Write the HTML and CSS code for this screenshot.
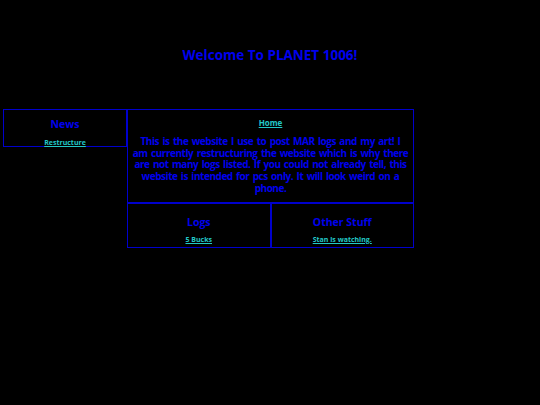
FILE: index.html
```html
<!DOCTYPE html>
<html>
<head>
<meta charset="utf-8">
<link rel="stylesheet" href="styles.css">
</head>
<body>
<h1 class="title">Welcome To PLANET 1006!</h1>
<div class="layout">
  <div class="box news">
    <h2 class="box-head">News</h2>
    <a class="link" href="#">Restructure</a>
  </div>
  <div class="right">
    <div class="box main">
      <a class="link home" href="#">Home</a>
      <p class="intro">This is the website I use to post MAR logs and my art! I<br>am currently restructuring the website which is why there<br>are not many logs listed. If you could not already tell, this<br>website is intended for pcs only. It will look weird on a<br>phone.</p>
    </div>
    <div class="row">
      <div class="box cell">
        <h2 class="box-head">Logs</h2>
        <a class="link" href="#">5 Bucks</a>
      </div>
      <div class="box cell">
        <h2 class="box-head">Other Stuff</h2>
        <a class="link" href="#">Stan is watching.</a>
      </div>
    </div>
  </div>
</div>
</body>
</html>
```

FILE: styles.css
```css
html, body {
  margin: 0;
  padding: 0;
  background: #000;
}
body {
  font-family: "Open Sans", "Liberation Sans", sans-serif;
  font-weight: 700;
  color: #0000ee;
  width: 540px;
  height: 405px;
}
.title {
  margin: 0;
  padding-top: 46px;
  height: 109px;
  box-sizing: border-box;
  text-align: center;
  font-size: 13.5px;
  line-height: 18px;
  font-weight: 700;
}
.layout {
  display: flex;
  align-items: flex-start;
  padding-left: 3px;
}
.box {
  border: 1px solid #0000cc;
  box-sizing: border-box;
  text-align: center;
}
.news {
  width: 124px;
  height: 38px;
}
.right {
  width: 287px;
  display: flex;
  flex-direction: column;
}
.main {
  height: 94px;
  padding: 6px 1px 0;
}
.row {
  display: flex;
}
.cell {
  flex: 1;
  height: 45px;
}
.box-head {
  margin: 0;
  padding-top: 7px;
  font-size: 10.5px;
  line-height: 14px;
  font-weight: 700;
}
.cell .box-head {
  padding-top: 11px;
}
.link {
  display: block;
  margin-top: 7px;
  font-size: 7px;
  line-height: 10px;
  color: #22c8c8;
  text-decoration: underline;
}
.cell .link {
  margin-top: 6px;
}
.main .home {
  margin-top: 2px;
  font-size: 8px;
}
.intro {
  margin: 8px 0 0;
  font-size: 10px;
  line-height: 11.7px;
  letter-spacing: -0.45px;
  word-spacing: 1.2px;
  white-space: nowrap;
}
```
